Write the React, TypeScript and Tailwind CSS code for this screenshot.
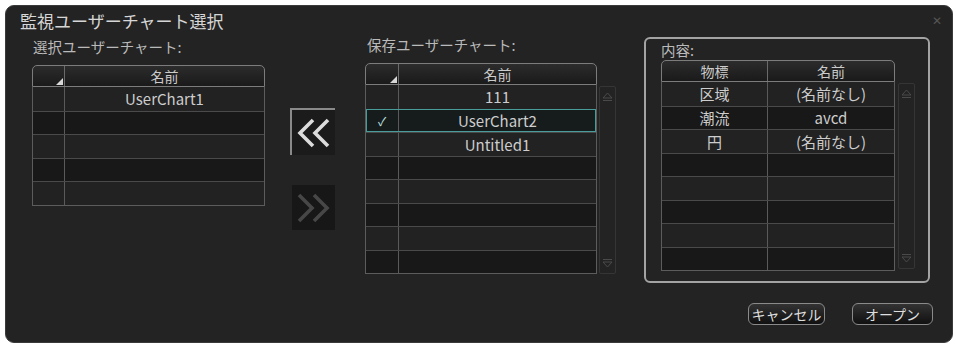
import type { ReactNode } from 'react';

const JP = "font-['Noto_Sans_CJK_JP',sans-serif]";

type Cell = string | ReactNode;

function HeaderTri() {
  return (
    <svg width="7" height="7" viewBox="0 0 7 7" className="absolute bottom-[1px] right-[1px]">
      <path d="M7 0 L7 7 L0 7 Z" fill="#d8d8d8" />
    </svg>
  );
}

function Grid({
  cols,
  header,
  rows,
  tri,
  selected,
}: {
  cols: string[];
  header: Cell[];
  rows: Cell[][];
  tri?: boolean;
  selected?: number;
}) {
  return (
    <div className="w-full">
      <div className="flex h-[22px] rounded-t-[5px] border border-[#7c7c7c] bg-gradient-to-b from-[#2c2c2c] to-[#1a1a1a]">
        {header.map((h, i) => (
          <div
            key={i}
            className={`${cols[i]} relative flex items-center justify-center text-[14px] text-[#cccccc] ${
              i > 0 ? 'border-l border-[#6a6a6a]' : ''
            }`}
          >
            {h}
            {tri && i === 0 && <HeaderTri />}
          </div>
        ))}
      </div>
      <div className="border-x border-b border-[#5c5c5c]">
        {rows.map((r, ri) => {
          const sel = selected === ri;
          return (
            <div
              key={ri}
              className={`relative flex h-[23.5px] ${ri > 0 ? 'border-t border-[#4a4a4a]' : ''} ${
                sel
                  ? 'bg-[#161c1c] outline outline-1 -outline-offset-1 outline-[#4a9c9a] z-10'
                  : ri % 2 === 1
                    ? 'bg-[#181818]'
                    : 'bg-[#222222]'
              }`}
            >
              {cols.map((c, ci) => (
                <div
                  key={ci}
                  className={`${c} flex items-center justify-center text-[15px] leading-none text-[#cdcdcd] ${
                    ci > 0 ? 'border-l border-[#5a5a5a]' : ''
                  }`}
                >
                  {r[ci]}
                </div>
              ))}
            </div>
          );
        })}
      </div>
    </div>
  );
}

function ScrollTrack({ h }: { h: string }) {
  return (
    <div className={`${h} flex w-[17px] flex-col justify-between rounded-[2px] border border-[#353535] py-[3px]`}>
      <svg width="15" height="12" viewBox="0 0 15 12">
        <path d="M3 8 L7.5 3 L12 8 Z" fill="none" stroke="#4a4a4a" strokeWidth="1" />
        <path d="M3 10.5 H12" stroke="#4a4a4a" strokeWidth="1" />
      </svg>
      <svg width="15" height="12" viewBox="0 0 15 12">
        <path d="M3 1.5 H12" stroke="#4a4a4a" strokeWidth="1" />
        <path d="M3 4 L7.5 9 L12 4 Z" fill="none" stroke="#4a4a4a" strokeWidth="1" />
      </svg>
    </div>
  );
}

function Chevrons({ dir, color }: { dir: 'left' | 'right'; color: string }) {
  const d =
    dir === 'left'
      ? ['M17 2 L4 15 L17 28', 'M32 2 L19 15 L32 28']
      : ['M3 2 L16 15 L3 28', 'M18 2 L31 15 L18 28'];
  return (
    <svg width="35" height="30" viewBox="0 0 35 30">
      {d.map((p) => (
        <path key={p} d={p} fill="none" stroke={color} strokeWidth="3.6" strokeLinejoin="miter" />
      ))}
    </svg>
  );
}

const blank = (n: number, w: number): Cell[][] => Array.from({ length: n }, () => Array(w).fill(''));

export default function App() {
  const leftRows: Cell[][] = [['', 'UserChart1'], ...blank(4, 2)];
  const midRows: Cell[][] = [
    ['', '111'],
    [<span className="text-[12px] text-[#bfe0e0]">✓</span>, 'UserChart2'],
    ['', 'Untitled1'],
    ...blank(5, 2),
  ];
  const rightRows: Cell[][] = [
    ['区域', '(名前なし)'],
    ['潮流', 'avcd'],
    ['円', '(名前なし)'],
    ...blank(5, 2),
  ];

  return (
    <div className={`${JP} h-[345px] w-[956px] bg-white p-[5px]`}>
      <div className="h-[338px] w-[948px] rounded-[9px] border border-[#3a3a3a] bg-[#232323]">
        <div className="flex h-[28px] items-center justify-between pl-[14px] pr-[10px]">
          <span className="text-[17px] leading-none text-[#d6d6d6]">監視ユーザーチャート選択</span>
          <span className="text-[12px] leading-none text-[#555]">✕</span>
        </div>

        <div className="flex h-[249px] items-start">
          <div className="ml-[26px] flex w-[233px] flex-col">
            <div className="mt-[4px] h-[18px] pl-[1px] text-[14.5px] leading-[18px] text-[#bababa]">
              選択ユーザーチャート:
            </div>
            <div className="mt-[9px]">
              <Grid cols={['w-[31px]', 'flex-1']} header={['', '名前']} rows={leftRows} tri />
            </div>
          </div>

          <div className="ml-[25px] flex w-[47px] flex-col">
            <div className="mt-[74px] flex h-[47px] w-[45px] items-center justify-center border-l-2 border-t-2 border-[#8a8a8a] bg-[#1b1b1b]">
              <Chevrons dir="left" color="#dcdcdc" />
            </div>
            <div className="ml-[2px] mt-[30px] flex h-[45px] w-[43px] items-center justify-center bg-[#171717]">
              <Chevrons dir="right" color="#474747" />
            </div>
          </div>

          <div className="ml-[28px] flex flex-col">
            <div className="mt-[2px] h-[18px] pl-[2px] text-[14.5px] leading-[18px] text-[#bababa]">
              保存ユーザーチャート:
            </div>
            <div className="mt-[9px] flex items-start gap-[2px]">
              <div className="w-[232px]">
                <Grid cols={['w-[32px]', 'flex-1']} header={['', '名前']} rows={midRows} tri selected={1} />
              </div>
              <div className="mt-[23px]">
                <ScrollTrack h="h-[188px]" />
              </div>
            </div>
          </div>

          <div className="ml-[28px] mt-[3px] h-[246px] w-[286px] rounded-[6px] border-2 border-[#a3a3a3] pl-[15px]">
            <div className="mt-[2px] h-[18px] text-[14.5px] leading-[18px] text-[#bababa]">内容:</div>
            <div className="mt-[1px] flex items-start gap-[3px]">
              <div className="w-[234px]">
                <Grid cols={['w-[105px]', 'flex-1']} header={['物標', '名前']} rows={rightRows} />
              </div>
              <div className="mt-[23px]">
                <ScrollTrack h="h-[186px]" />
              </div>
            </div>
          </div>
        </div>

        <div className="mt-[20px] flex justify-end gap-[27px] pr-[19px]">
          <button className="flex h-[22px] w-[77px] items-center justify-center rounded-[6px] border border-[#8a8a8a] bg-gradient-to-b from-[#333] to-[#111] text-[14px] leading-none text-[#dedede]">
            キャンセル
          </button>
          <button className="flex h-[22px] w-[81px] items-center justify-center rounded-[6px] border border-[#8a8a8a] bg-gradient-to-b from-[#333] to-[#111] text-[14px] leading-none text-[#dedede]">
            オープン
          </button>
        </div>
      </div>
    </div>
  );
}
